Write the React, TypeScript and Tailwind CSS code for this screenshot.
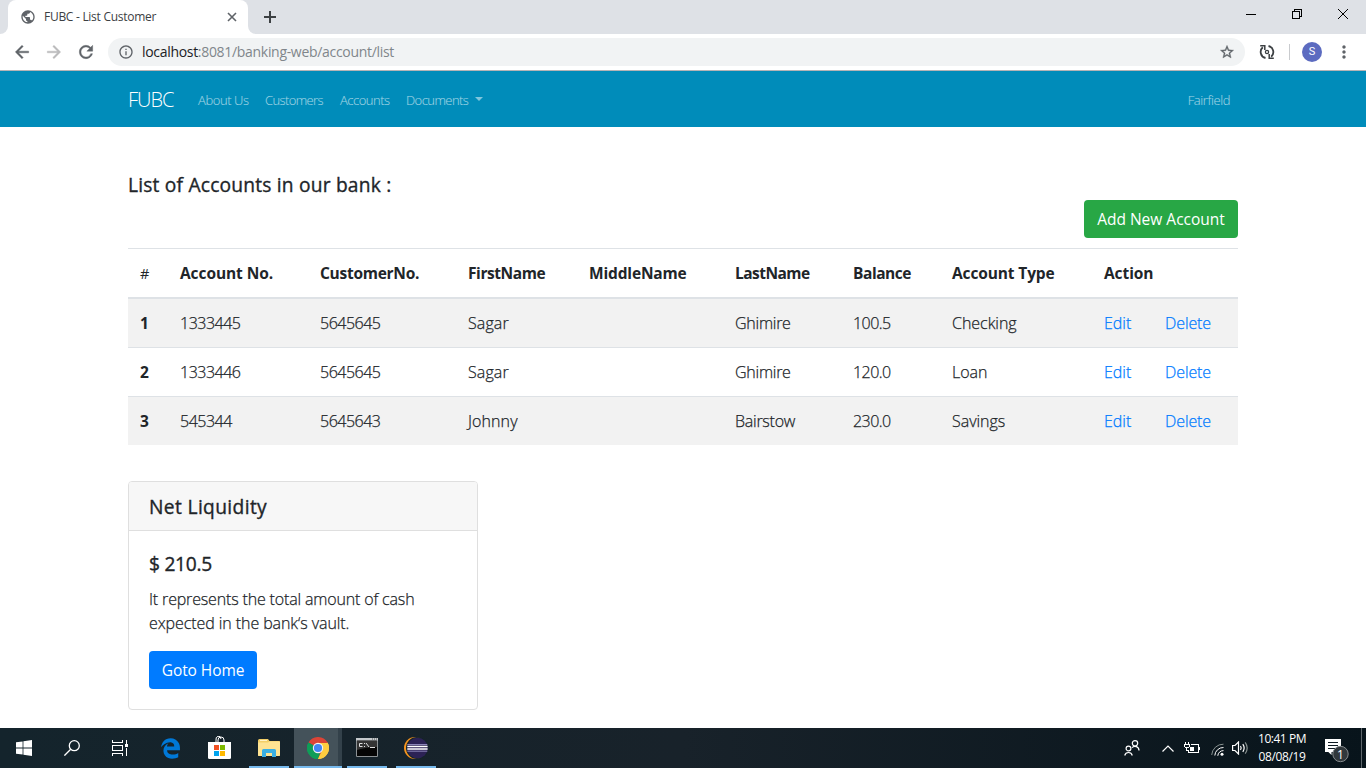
import type { ReactNode } from "react";
import {
  MdArrowBack,
  MdArrowForward,
  MdInfoOutline,
  MdMoreVert,
  MdPublic,
  MdRefresh,
  MdStarBorder,
} from "react-icons/md";
import { FaEdgeLegacy } from "react-icons/fa6";

type Label = { text: string; className: string };

const navLinks: Label[] = [
  { text: "About Us", className: "ml-6 w-[51px] tracking-[-0.42px]" },
  { text: "Customers", className: "ml-4 w-[58px] tracking-[-0.62px]" },
  { text: "Accounts", className: "ml-[17px] w-[50px] tracking-[-0.5px]" },
  { text: "Documents", className: "ml-4 w-[62px] tracking-[-0.56px]" },
];

const columns: Label[] = [
  { text: "#", className: "w-[40px]" },
  { text: "Account No.", className: "w-[140px] tracking-[-0.08px]" },
  { text: "CustomerNo.", className: "w-[148px] tracking-[-0.27px]" },
  { text: "FirstName", className: "w-[121px] tracking-[-0.42px]" },
  { text: "MiddleName", className: "w-[146px] tracking-[-0.16px]" },
  { text: "LastName", className: "w-[118px] tracking-[-0.54px]" },
  { text: "Balance", className: "w-[99px] tracking-[-0.45px]" },
  { text: "Account Type", className: "w-[152px] tracking-[-0.13px]" },
  { text: "Action", className: "w-[61px] tracking-[-0.08px]" },
  { text: "", className: "w-[85px]" },
];

const accounts = [
  { no: "1333445", customer: "5645645", first: "Sagar", middle: "", last: "Ghimire", balance: "100.5", type: "Checking" },
  { no: "1333446", customer: "5645645", first: "Sagar", middle: "", last: "Ghimire", balance: "120.0", type: "Loan" },
  { no: "545344", customer: "5645643", first: "Johnny", middle: "", last: "Bairstow", balance: "230.0", type: "Savings" },
];

function TitleBar() {
  return (
    <div className="flex h-[34px] bg-[#dee1e6] text-[#3c4043]">
      <div className="flex w-2 items-end bg-white">
        <div className="h-full w-2 rounded-br-lg bg-[#dee1e6]" />
      </div>
      <div className="flex w-[240px] items-center rounded-t-lg bg-white pl-3 pr-2.5">
        <MdPublic className="size-4 text-[#5f6368]" />
        <span className="ml-2 text-xs tracking-[-0.28px]">FUBC - List Customer</span>
        <svg viewBox="0 0 10 10" className="ml-auto mr-px size-2.5" fill="none" stroke="#5f6368" strokeWidth="1.6">
          <path d="M1 1l8 8M9 1l-8 8" />
        </svg>
      </div>
      <div className="w-2 bg-white">
        <div className="h-full w-2 rounded-bl-lg bg-[#dee1e6]" />
      </div>
      <svg viewBox="0 0 12 12" className="ml-2 mt-[11px] size-3" stroke="#3c4043" strokeWidth="2">
        <path d="M6 0v12M0 6h12" />
      </svg>
      <div className="ml-auto flex h-[29px] [&>svg]:h-[29px] [&>svg]:w-[46px]">
        <svg viewBox="0 0 46 29" fill="none" stroke="#000" shapeRendering="crispEdges">
          <path d="M18 14.5h10" />
        </svg>
        <svg viewBox="0 0 46 29" fill="none" stroke="#000" shapeRendering="crispEdges">
          <path d="M18.5 11.500h7v7h-7zM20.5 11.500v-2h7v7h-2" />
        </svg>
        <svg viewBox="0 0 46 29" fill="none" stroke="#000">
          <path d="M18 9l10 10M28 9l-10 10" />
        </svg>
      </div>
    </div>
  );
}

function Toolbar() {
  return (
    <div className="flex h-[37px] items-center border-b border-[#b6b4b6] bg-white pl-3 text-[#5f6368]">
      <MdArrowBack className="size-5 [&>path:last-child]:stroke-current [&>path:last-child]:[stroke-width:0.5]" />
      <MdArrowForward className="ml-3 size-5 text-[#bababc] [&>path:last-child]:stroke-current [&>path:last-child]:[stroke-width:0.5]" />
      <MdRefresh className="ml-3 size-5 [&>path:last-child]:stroke-current [&>path:last-child]:[stroke-width:0.5]" />
      <div className="ml-3 flex h-7 w-[1137px] items-center rounded-full bg-[#f1f3f4] pl-2.5 pr-2.5">
        <MdInfoOutline className="size-4" />
        <span className="ml-2 text-sm tracking-[-0.31px] text-[#80868b]">
          <span className="text-[#202124]">localhost</span>:8081/banking-web/account/list
        </span>
        <MdStarBorder className="ml-auto size-4 [&>path:last-child]:stroke-current [&>path:last-child]:[stroke-width:0.5]" />
      </div>
      <svg viewBox="0 0 16 16" className="ml-3.5 size-4" fill="none" stroke="#3c4043" strokeWidth="1.8">
        <path d="M3.800 3.300A6.200 6.200 0 0 0 6.500 14M12.200 12.700A6.200 6.200 0 0 0 9.500 2" />
        <path d="M1.200 1.700h4.600v4.200M14.800 14.300h-4.600v-4.200" strokeWidth="1.500" />
        <circle cx="8" cy="8" r="1.600" strokeWidth="1.300" />
      </svg>
      <div className="ml-3.5 h-4 w-px bg-[#c9cbce]" />
      <div className="ml-3 flex size-5 items-center justify-center rounded-full bg-[#5c6bc0] font-[Roboto] text-[11px] text-white">
        S
      </div>
      <MdMoreVert className="ml-3 size-5" />
    </div>
  );
}

function NavBar() {
  return (
    <nav className="flex h-14 items-center bg-[#008cba] px-32 text-[13px] font-light text-white/65">
      <span className="mt-0.5 w-[46px] whitespace-nowrap text-xl tracking-[-0.95px] text-white">FUBC</span>
      {navLinks.map((l) => (
        <span key={l.text} className={`mt-1 whitespace-nowrap ${l.className}`}>
          {l.text}
        </span>
      ))}
      <span className="ml-[7px] border-x-4 border-t-4 border-x-transparent border-t-white/50" />
      <span className="ml-auto mr-[8px] mt-1 tracking-[-0.42px]">Fairfield</span>
    </nav>
  );
}

function AccountTable() {
  return (
    <table className="mt-2.5 w-[1110px] table-fixed border-separate border-spacing-0 text-left text-base [&_td]:px-3 [&_td]:pb-px [&_td]:pt-0 [&_th]:px-3 [&_th]:pb-0 [&_th]:pt-0.5">
      <thead>
        <tr className="h-[51px]">
          {columns.map((c) => (
            <th
              key={c.text}
              className={`whitespace-nowrap border-b-2 border-t border-[#dee2e6] text-[15.500px] font-bold ${c.className}`}
            >
              {c.text === "#" ? <span className="text-[14.500px] font-medium">#</span> : c.text}
            </th>
          ))}
        </tr>
      </thead>
      <tbody className="[&>tr:nth-child(odd)]:bg-[#f2f2f2] [&>tr+tr>*]:border-t [&>tr>*]:border-[#dee2e6] [&_td]:font-light [&_td]:[-webkit-text-stroke:0.25px]">
        {accounts.map((a, i) => (
          <tr key={a.no} className="h-12 [&+tr]:h-[49px]">
            <th className="text-[15.500px] font-bold">{i + 1}</th>
            <td className="tracking-[-0.5px]">{a.no}</td>
            <td className="tracking-[-0.5px]">{a.customer}</td>
            <td className="tracking-[0.1px]">{a.first}</td>
            <td>{a.middle}</td>
            <td className="tracking-[-0.25px]">{a.last}</td>
            <td className="tracking-[-0.55px]">{a.balance}</td>
            <td className="tracking-[-0.03px]">{a.type}</td>
            <td className="text-[#007bff]">Edit</td>
            <td className="tracking-[-0.1px] text-[#007bff]">Delete</td>
          </tr>
        ))}
      </tbody>
    </table>
  );
}

function LiquidityCard() {
  return (
    <section className="mt-9 h-[229px] w-[350px] rounded border border-[#dfdfdf] bg-white">
      <h5 className="h-[49px] rounded-t-[3px] border-b border-[#dfdfdf] bg-[#f7f7f7] px-5 pt-[13px] text-[19.200px] font-medium leading-6 tracking-[0.37px] [-webkit-text-stroke:0.35px]">
        Net Liquidity
      </h5>
      <div className="px-5 pt-[21px]">
        <h5 className="text-[19.200px] font-medium leading-6 tracking-[-0.28px] [-webkit-text-stroke:0.35px]">$ 210.5</h5>
        <p className="mt-[11px] whitespace-nowrap font-light leading-6 tracking-[-0.16px] [-webkit-text-stroke:0.25px]">
          It represents the total amount of cash
          <br />
          <span className="tracking-[-0.08px]">expected in the bank‘s vault.</span>
        </p>
        <button className="mt-4 h-[38px] w-[108px] whitespace-nowrap rounded bg-[#007bff] pt-px text-[15.500px] tracking-[-0.08px] text-white">
          Goto Home
        </button>
      </div>
    </section>
  );
}

function TaskCell({ children, active, open }: { children?: ReactNode; active?: boolean; open?: boolean }) {
  return (
    <div className={`flex h-10 w-12 flex-col items-center ${active ? "border-r-4 border-[#33414a] bg-[#44525a]" : ""}`}>
      <div className={`flex h-[38px] items-center pt-0.5 ${active ? "ml-1" : ""}`}>{children}</div>
      {open && <div className={`h-0.5 self-center bg-[#76b9ed] ${active ? "w-12 -mr-1" : "w-10"}`} />}
    </div>
  );
}

function Taskbar() {
  return (
    <footer className="flex h-10 bg-linear-to-r from-[#14242c] via-[#18222a] to-[#08141b] text-white">
      <TaskCell>
        <svg viewBox="0 0 16 16" className="size-4" fill="#fff">
          <path d="M0 2.300L6.600 1.400V7.600H0zM7.400 1.300L16 0v7.600H7.400zM0 8.400h6.600v6.200L0 13.700zM7.400 8.400H16V16l-8.600-1.300z" />
        </svg>
      </TaskCell>
      <TaskCell>
        <svg viewBox="0 0 16 16" className="size-4" fill="none" stroke="#fff" strokeWidth="1.300">
          <circle cx="10.300" cy="5.700" r="5" />
          <path d="M6.700 9.300L.4 15.600" />
        </svg>
      </TaskCell>
      <TaskCell>
        <svg viewBox="0 0 16 16" className="size-4" fill="none" stroke="#fff" shapeRendering="crispEdges">
          <path d="M.5 0v2.500h10V0M.5 16v-2.500h10V16M.5 5.500h10v5H.5zM14.500 0v4M14.500 8v8" />
          <rect x="13" y="4" width="3" height="3" fill="#fff" stroke="none" />
        </svg>
      </TaskCell>
      <div className="ml-[3px] flex gap-px">
        <TaskCell>
          <FaEdgeLegacy className="mr-px size-[21px] text-[#0078d7]" />
        </TaskCell>
        <TaskCell>
          <svg viewBox="0 0 24 24" className="mr-px size-6">
            <path d="M8 6V4.500a2.500 3.500 0 0 1 5-1.500M10 6V4a3 3 0 0 1 6 0v2" fill="none" stroke="#fff" strokeWidth="1" />
            <path d="M0 6h23v15.500a1.500 1.500 0 0 1-1.500 1.500h-20A1.500 1.500 0 0 1 0 21.500z" fill="#fff" />
            <path d="M6 9h5v5H6z" fill="#f25022" />
            <path d="M12 9h5v5h-5z" fill="#7fba00" />
            <path d="M6 15h5v5H6z" fill="#00a4ef" />
            <path d="M12 15h5v5h-5z" fill="#ffb900" />
          </svg>
        </TaskCell>
        <TaskCell open>
          <svg viewBox="0 0 22 18" className="h-[18px] w-[22px]">
            <path d="M0 1.500Q0 0 1.500 0H10l1.500 2H21q1 0 1 1v13q0 1-1 1H1q-1 0-1-1z" fill="#f3cf68" />
            <path d="M0 3.500h10l1.500-1H22V16q0 1-1 1H1q-1 0-1-1z" fill="#fee392" />
            <path d="M2 1h7v1H2z" fill="#fff3c8" />
            <path d="M4 18v-6.500Q4 10 5.500 10h11q1.500 0 1.500 1.500V18h-4v-4H8v4z" fill="#3aafe3" />
          </svg>
        </TaskCell>
        <TaskCell active open>
          <svg viewBox="0 0 22 22" className="size-[22px]">
            <path d="M11 11L1.470 5.500A11 11 0 0 1 20.530 5.500z" fill="#db4437" />
            <path d="M11 11V22A11 11 0 0 1 1.470 5.500z" fill="#0f9d58" />
            <path d="M11 11L20.530 5.500A11 11 0 0 1 11 22z" fill="#ffcd40" />
            <path d="M11 6h9.800l-.3-.5H11zM6.700 13.500L11 22l4.300-8.500z" fill="#db4437" />
            <path d="M6.700 13.500L1.470 5.500A11 11 0 0 0 11 22l2-5.500z" fill="#0f9d58" />
            <path d="M15.300 13.500L11 22A11 11 0 0 0 20.800 6H11z" fill="#ffcd40" />
            <circle cx="11" cy="11" r="5.200" fill="#f4f4f4" />
            <circle cx="11" cy="11" r="4.100" fill="#4285f4" />
          </svg>
        </TaskCell>
        <TaskCell open>
          <svg viewBox="0 0 22 19" className="mb-0.5 h-[19px] w-[22px]">
            <path d="M.5.5h21v18H.5z" fill="#050505" stroke="#8d9295" />
            <path d="M0 0h22v2.500H0z" fill="#c5c9cc" />
            <path d="M16 1h1M18 1h1M20 1h1" stroke="#555" />
            <path d="M1 3h20v6Q10 9 1 12z" fill="#343434" />
            <path d="M6.500 5.500h-3v3h3M8.500 5v1M8.500 8v1M10 5l3 4M14 9.500h5" fill="none" stroke="#e0e0e0" />
          </svg>
        </TaskCell>
        <TaskCell open>
          <svg viewBox="0 0 24 22" className="h-[22px] w-6">
            <circle cx="11" cy="11" r="11" fill="#f7941e" />
            <circle cx="13" cy="11" r="11" fill="#14242c" />
            <circle cx="13.500" cy="11" r="10.300" fill="#2c2255" />
            <path d="M3.300 9.500h20.300M3.300 12h20.300" stroke="#fff" strokeWidth="1.500" />
            <path d="M3.300 7.500h20M3.300 14.200h20" stroke="#8c86b8" strokeWidth="1" />
          </svg>
        </TaskCell>
      </div>
      <div className="ml-auto flex items-center">
        <svg viewBox="0 0 16 16" className="size-4" fill="none" stroke="#fff" strokeWidth="1.200">
          <circle cx="4.500" cy="8.500" r="2.400" />
          <path d="M.7 15.500a3.900 3.900 0 0 1 7.600 0" />
          <circle cx="11" cy="3.300" r="2.700" />
          <path d="M8 7.700a4 4 0 0 1 7 2.700" />
        </svg>
        <svg viewBox="0 0 12 7" className="ml-[22px] h-[7px] w-3" fill="none" stroke="#fff" strokeWidth="1.200">
          <path d="M.5 6.500L6 1l5.500 5.500" />
        </svg>
        <svg viewBox="0 0 16 12" className="ml-[10px] h-3 w-4" fill="none" stroke="#fff" shapeRendering="crispEdges">
          <path d="M7 2.500h7.500v8H4.500V8M15.500 5v3M1.500 0v2M4.500 0v2M0 2.500h6M.5 3v2M5.500 3v2M1 5.500h4M2.500 6v2.500h2" />
          <path d="M6 5h4v4H6z" fill="#fff" stroke="none" />
        </svg>
        <svg viewBox="0 0 13 13" className="ml-[11px] mt-[3px] size-[13px]" fill="none">
          <path d="M.7 12A11.500 11.500 0 0 1 12.500 1.200" stroke="#87908f" />
          <path d="M3.800 12.500a8.500 8.500 0 0 1 8.700-8" stroke="#fff" />
          <path d="M6.800 12.800a5.500 5.500 0 0 1 5.700-5.200" stroke="#fff" />
          <circle cx="11" cy="11.300" r="1.500" fill="#fff" />
        </svg>
        <svg viewBox="0 0 17 14" className="ml-[8px] h-3.5 w-[17px]" fill="none" stroke="#fff" strokeWidth="1.200">
          <path d="M.6 4.500H3l3.500-3.500v12L3 9.500H.6z" />
          <path d="M8.500 5q1.400 2 0 4M10.800 3.200q2.700 3.800 0 7.600" />
          <path d="M13.200 1.300q4 5.700 0 11.400" stroke="#87908f" />
        </svg>
        <div className="ml-[6px] w-[54px] whitespace-nowrap text-center text-xs leading-[18px]">
          <div className="tracking-[-0.47px]">10:41 PM</div>
          <div className="tracking-[-0.4px]">08/08/19</div>
        </div>
        <svg viewBox="0 0 25 24" className="ml-4 mt-[6px] h-6 w-[25px]">
          <path d="M0 0h16v13H6.500v3L3.300 13H0z" fill="#fff" />
          <path d="M3 3.500h10M3 6.500h10M3 9.500h7" stroke="#101c24" />
          <circle cx="15.500" cy="15" r="7.700" fill="#31383c" stroke="#858a8d" />
          <text x="15.500" y="19.500" textAnchor="middle" fontSize="12" fill="#fff" fontFamily="Open Sans">
            1
          </text>
        </svg>
        <div className="ml-[11px] mr-1 h-10 w-px bg-[#5e666b]" />
      </div>
    </footer>
  );
}

export default function App() {
  return (
    <div className="flex h-[768px] w-[1366px] flex-col overflow-hidden bg-white font-['Open_Sans','Noto_Sans',sans-serif] text-[#212529]">
      <TitleBar />
      <Toolbar />
      <NavBar />
      <main className="flex flex-1 flex-col px-32 pt-[46px]">
        <h5 className="text-[19.200px] font-medium leading-6 tracking-[0.2px] [-webkit-text-stroke:0.35px]">
          List of Accounts in our bank :
        </h5>
        <button className="mt-[3px] h-[38px] w-[154px] self-end whitespace-nowrap rounded bg-[#28a745] pt-px text-[15.500px] text-white">
          Add New Account
        </button>
        <AccountTable />
        <LiquidityCard />
      </main>
      <Taskbar />
    </div>
  );
}
